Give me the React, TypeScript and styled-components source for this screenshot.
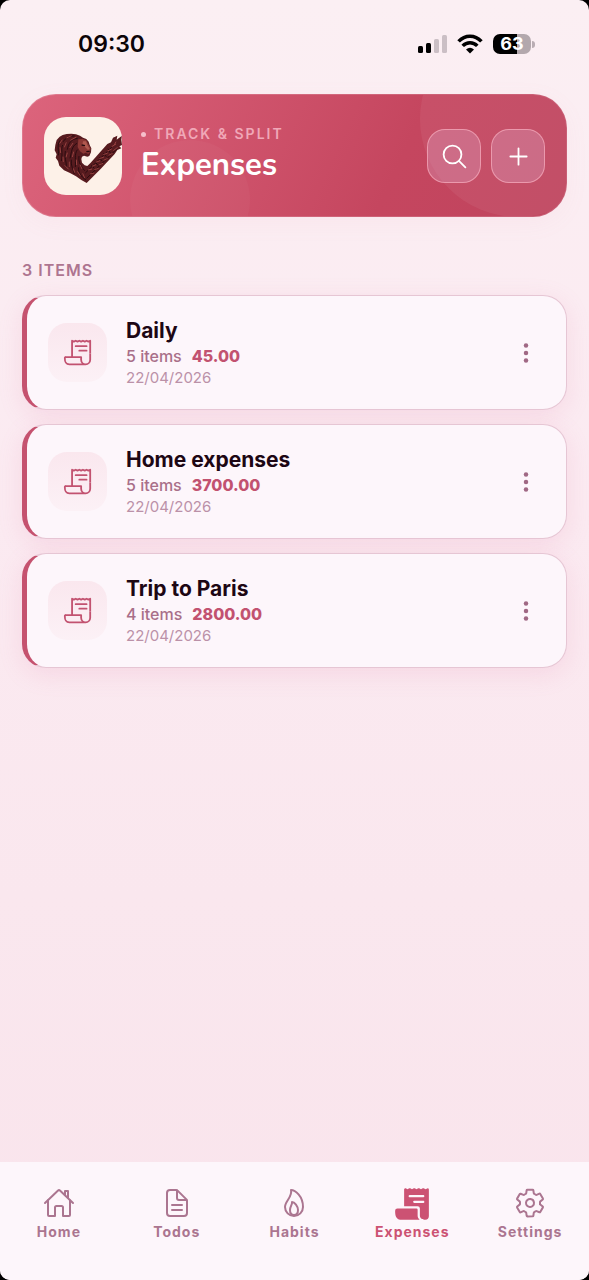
import React from 'react';
import styled, { createGlobalStyle } from 'styled-components';
import {
  IoAddOutline,
  IoDocumentTextOutline,
  IoEllipsisVertical,
  IoFlameOutline,
  IoHomeOutline,
  IoReceipt,
  IoReceiptOutline,
  IoSearchOutline,
  IoSettingsOutline,
} from 'react-icons/io5';

const GlobalStyle = createGlobalStyle`
  * { box-sizing: border-box; }
  body {
    margin: 0;
    background: #000;
    font-family: Inter, "Liberation Sans", sans-serif;
  }
  button { font: inherit; padding: 0; cursor: pointer; }
  h1, h2, p { margin: 0; }
`;

const Screen = styled.div`
  display: flex;
  flex-direction: column;
  min-height: 100vh;
  overflow: hidden;
  border-radius: 10px;
  background: linear-gradient(180deg, #fbeff3 0%, #fbeaf1 40%, #fae7ee 70%, #f9e4ec 100%);
`;

const StatusBar = styled.div`
  display: flex;
  align-items: center;
  justify-content: space-between;
  height: 88px;
  padding: 0 54px 0 78px;
`;

const Clock = styled.time`
  font-size: 23px;
  line-height: 30px;
  font-weight: 600;
  color: #0c0408;
`;

const StatusIcons = styled.div`
  display: flex;
  align-items: center;
  gap: 10px;
`;

const Battery = styled.div`
  display: flex;
  align-items: center;
  gap: 1px;
  &::after {
    content: '';
    width: 3px;
    height: 7px;
    border-radius: 0 3px 3px 0;
    background: #b9adb3;
  }
`;

const BatteryBody = styled.div`
  width: 38px;
  height: 20px;
  border-radius: 7px;
  background: linear-gradient(90deg, #000 63%, #b3a8ad 63%);
  color: #fff;
  font-size: 18px;
  line-height: 20px;
  font-weight: 700;
  text-align: center;
`;

const Header = styled.header`
  position: relative;
  overflow: hidden;
  display: flex;
  align-items: center;
  gap: 19px;
  margin: 6px 22px 0;
  padding: 22px 21px 21px;
  border: 1px solid rgba(255, 255, 255, 0.15);
  border-radius: 34px;
  background: linear-gradient(115deg, #dc647c 0%, #c5465f 68%, #bf445e 100%);
  background-origin: border-box;
  box-shadow: 0 6px 24px rgba(222, 130, 160, 0.06);
`;

const Bubble = styled.span<{ $size: number; $opacity: number }>`
  position: absolute;
  width: ${(p) => p.$size}px;
  height: ${(p) => p.$size}px;
  border-radius: 50%;
  background: rgba(255, 255, 255, ${(p) => p.$opacity});
`;

const TopBubble = styled(Bubble)`
  top: -74px;
  right: -50px;
`;

const LowBubble = styled(Bubble)`
  top: 45px;
  left: 107px;
`;

const Logo = styled.div`
  position: relative;
  flex: none;
  width: 78px;
  height: 78px;
  overflow: hidden;
  border-radius: 22px;
  background: #fdf1e8;
  svg { display: block; }
`;

const Heading = styled.div`
  position: relative;
  flex: 1;
  min-width: 0;
`;

const Eyebrow = styled.p`
  display: flex;
  align-items: center;
  gap: 8px;
  font-size: 14px;
  line-height: 18px;
  font-weight: 600;
  letter-spacing: 2px;
  color: #f0a8b8;
  &::before {
    content: '';
    width: 5px;
    height: 5px;
    border-radius: 50%;
    background: #f6bfcb;
  }
`;

const Title = styled.h1`
  font-family: Nunito, "Open Sans", sans-serif;
  font-size: 31px;
  line-height: 44px;
  font-weight: 700;
  color: #fff;
`;

const Actions = styled.div`
  position: relative;
  display: flex;
  gap: 10px;
`;

const ActionButton = styled.button`
  display: grid;
  place-items: center;
  width: 54px;
  height: 54px;
  border: 1px solid rgba(255, 185, 200, 0.6);
  border-radius: 18px;
  background: rgba(220, 165, 195, 0.34);
  color: #fff;
`;

const Main = styled.main`
  padding: 42px 22px 40px;
`;

const Count = styled.h2`
  font-size: 16px;
  line-height: 22px;
  font-weight: 600;
  letter-spacing: 1px;
  color: #ae7590;
`;

const List = styled.ul`
  display: flex;
  flex-direction: column;
  gap: 14px;
  margin: 14px 0 0;
  padding: 0;
  list-style: none;
`;

const Card = styled.li`
  display: flex;
  align-items: center;
  gap: 19px;
  min-height: 115px;
  padding: 0 20px 0 21px;
  border: 1px solid #e6c6d4;
  border-left: 5px solid #c5526f;
  border-radius: 24px;
  background: #fdf6fb;
  box-shadow: 0 6px 24px rgba(225, 120, 160, 0.16);
`;

const CardIcon = styled.div`
  display: grid;
  place-items: center;
  flex: none;
  width: 59px;
  height: 59px;
  border-radius: 19px;
  background: linear-gradient(180deg, #fae7ee, #fcf1f6);
  color: #c25270;
`;

const CardText = styled.div`
  flex: 1;
  min-width: 0;
`;

const Name = styled.p`
  font-size: 21px;
  line-height: 28px;
  font-weight: 700;
  color: #1d0714;
`;

const Summary = styled.p`
  display: flex;
  gap: 10px;
  font-size: 16px;
  line-height: 22px;
  font-weight: 500;
  color: #a96f89;
  strong {
    font-weight: 800;
    color: #c25270;
  }
`;

const DateText = styled.p`
  font-size: 15px;
  line-height: 22px;
  color: #bb91a8;
`;

const MoreButton = styled.button`
  display: grid;
  place-items: center;
  width: 40px;
  height: 40px;
  border: 0;
  background: none;
  color: #a06884;
`;

const TabBar = styled.nav`
  display: grid;
  grid-template-columns: repeat(5, 1fr);
  align-items: start;
  height: 118px;
  margin-top: auto;
  padding-top: 24px;
  background: #fdf6fb;
`;

const TabIcon = styled.span`
  display: grid;
  place-items: center;
  height: 34px;
  margin-bottom: 2px;
`;

const Tab = styled.a<{ $active?: boolean }>`
  display: flex;
  flex-direction: column;
  align-items: center;
  font-size: 14px;
  line-height: 20px;
  font-weight: 700;
  letter-spacing: 1px;
  text-decoration: none;
  color: ${(p) => (p.$active ? '#cc5273' : '#ab7590')};
`;

const expenses = [
  { name: 'Daily', count: 5, total: '45.00', date: '22/04/2026' },
  { name: 'Home expenses', count: 5, total: '3700.00', date: '22/04/2026' },
  { name: 'Trip to Paris', count: 4, total: '2800.00', date: '22/04/2026' },
];

const tabs = [
  { label: 'Home', icon: IoHomeOutline },
  { label: 'Todos', icon: IoDocumentTextOutline },
  { label: 'Habits', icon: IoFlameOutline },
  { label: 'Expenses', icon: IoReceipt, active: true },
  { label: 'Settings', icon: IoSettingsOutline },
];

const Signal = () => (
  <svg width="29" height="20" viewBox="0 0 29 20" aria-label="Signal">
    <rect x="0" y="12" width="5" height="7" rx="1.5" fill="#000" />
    <rect x="8" y="9" width="5" height="10" rx="1.5" fill="#000" />
    <rect x="16" y="5" width="5" height="14" rx="1.5" fill="#cbbfc5" />
    <rect x="24" y="1" width="5" height="18" rx="1.5" fill="#cbbfc5" />
  </svg>
);

const Wifi = () => (
  <svg width="26" height="20" viewBox="0 0 26 20" fill="none" stroke="#000" strokeWidth="3.5" aria-label="Wi-Fi">
    <path d="M1.600 7.400C8 .4 18 .4 24.400 7.400" />
    <path d="M5.700 11.900C9.800 7.600 16.200 7.600 20.300 11.900" />
    <path d="M13 19.500L9 15.500Q13 12 17 15.500Z" fill="#000" stroke="none" />
  </svg>
);

/* Lion whose mane and raised wing form a check mark. */
const LionMark = () => (
  <svg width="78" height="78" viewBox="0 0 234 234" aria-label="Lion logo">
    <path
      fill="#571b1f"
      d="M34 84L38 69L47 59L56 54L68 51L82 50L96 52L108 56L117 62L127 66L134 74L137 84L142 94L141 106L136 117L130 119L120 116L114 119L112 126L114 137L122 145L130 147L140 137L190 81L201 76L207 62L220 56L218 68L234 56L232 68L234 84L226 88L232 94L220 99L212 111L172 154L128 198L112 189L96 178L78 168L60 160L46 146L42 132L35 122L38 112L32 100Z"
    />
    <path
      fill="#8a3734"
      d="M103 67L116 66L127 70L133 82L140 94L138 105L133 111L125 107L118 110L108 103L101 90Z"
    />
    <path fill="#b0594f" d="M117 73L126 73L130 84L137 95L132 99L124 91L115 85Z" />
    <path d="M113 84L123 86M127 104L137 103" stroke="#260a0e" strokeWidth="4" />
    <g fill="none" stroke="#2a0c10" strokeWidth="3">
      <path d="M92 57C78 56 64 62 58 74M101 64C82 66 73 78 70 98M99 79C82 88 83 106 78 124M48 70C38 85 45 98 43 115M56 84C50 98 57 108 52 132M100 98C90 114 96 126 94 150M64 102C60 122 68 132 67 151M82 128C80 146 88 158 91 171M105 117C102 136 112 150 122 161M104 151C102 166 112 180 126 189" />
      <path d="M124 168L204 90M128 184L220 94M142 145L151 154M153 134L162 145M166 121L174 132M178 108L187 119M192 95L199 108" />
    </g>
    <g fill="none" stroke="#964240" strokeWidth="3">
      <path d="M83 56L67 63M97 60L79 70M55 68L47 80M67 76L61 91M87 78L77 93M48 91L50 108M70 107L66 121M89 104L85 120M57 119L58 135M76 134L76 150M97 128L98 144M62 145L74 157M88 154L92 167M108 143L114 156M100 163L109 176M116 169L122 183" />
      <path d="M132 159L144 156M144 148L156 143M155 136L168 131M166 125L180 120M178 113L191 108M190 102L203 96M203 89L216 81M138 171L151 168M151 158L164 154M165 144L177 139M179 130L191 124M194 115L206 109M208 101L221 91M216 74L211 84" />
    </g>
  </svg>
);

export default function App() {
  return (
    <>
      <GlobalStyle />
      <Screen>
        <StatusBar>
          <Clock>09:30</Clock>
          <StatusIcons>
            <Signal />
            <Wifi />
            <Battery>
              <BatteryBody>63</BatteryBody>
            </Battery>
          </StatusIcons>
        </StatusBar>
        <Header>
          <TopBubble $size={196} $opacity={0.06} />
          <LowBubble $size={120} $opacity={0.03} />
          <Logo>
            <LionMark />
          </Logo>
          <Heading>
            <Eyebrow>TRACK &amp; SPLIT</Eyebrow>
            <Title>Expenses</Title>
          </Heading>
          <Actions>
            <ActionButton type="button" aria-label="Search">
              <IoSearchOutline size={29} />
            </ActionButton>
            <ActionButton type="button" aria-label="Add expense list">
              <IoAddOutline size={29} />
            </ActionButton>
          </Actions>
        </Header>
        <Main>
          <Count>3 ITEMS</Count>
          <List>
            {expenses.map((e) => (
              <Card key={e.name}>
                <CardIcon>
                  <IoReceiptOutline size={29} />
                </CardIcon>
                <CardText>
                  <Name>{e.name}</Name>
                  <Summary>
                    <span>{e.count} items</span>
                    <strong>{e.total}</strong>
                  </Summary>
                  <DateText>{e.date}</DateText>
                </CardText>
                <MoreButton type="button" aria-label={`More options for ${e.name}`}>
                  <IoEllipsisVertical size={24} />
                </MoreButton>
              </Card>
            ))}
          </List>
        </Main>
        <TabBar>
          {tabs.map(({ label, icon: Icon, active }) => (
            <Tab key={label} href={`#${label.toLowerCase()}`} $active={active}>
              <TabIcon>
                <Icon size={active ? 36 : 32} />
              </TabIcon>
              {label}
            </Tab>
          ))}
        </TabBar>
      </Screen>
    </>
  );
}
